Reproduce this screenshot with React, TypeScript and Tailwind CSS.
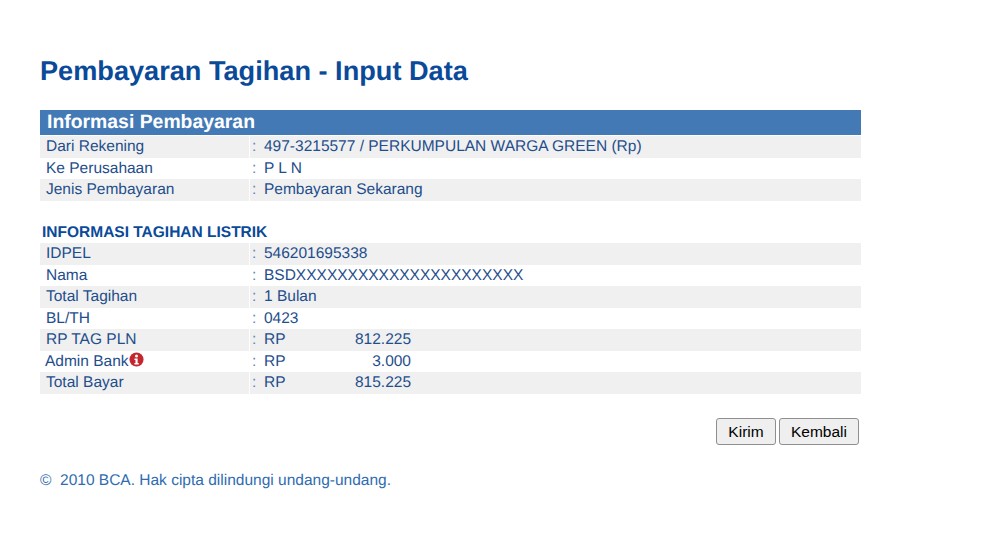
const paymentRows = [
  { label: 'Dari Rekening', value: '497-3215577 / PERKUMPULAN WARGA GREEN (Rp)' },
  { label: 'Ke Perusahaan', value: 'P L N' },
  { label: 'Jenis Pembayaran', value: 'Pembayaran Sekarang' },
];

const billRows = [
  { label: 'IDPEL', value: '546201695338' },
  { label: 'Nama', value: 'BSDXXXXXXXXXXXXXXXXXXXXXX' },
  { label: 'Total Tagihan', value: '1 Bulan' },
  { label: 'BL/TH', value: '0423' },
  { label: 'RP TAG PLN', amount: '812.225' },
  { label: 'Admin Bank', amount: '3.000', info: true },
  { label: 'Total Bayar', amount: '815.225' },
];

type RowData = { label: string; value?: string; amount?: string; info?: boolean };

function InfoIcon() {
  return (
    <svg viewBox="0 0 16 16" className="h-[15px] w-[15px] shrink-0 -translate-y-[2px]">
      <circle cx="8" cy="8" r="7.5" fill="#c4262e" />
      <circle cx="8" cy="4.2" r="1.6" fill="#fff" />
      <path d="M5.8 6.8h3.4v5h1.2v1.6H5.8v-1.6h1.1V8.4H5.8z" fill="#fff" />
    </svg>
  );
}

function Row({ row, shaded }: { row: RowData; shaded: boolean }) {
  const bg = shaded ? 'bg-[#f0f0f0]' : 'bg-white';
  return (
    <div className="flex h-[21.55px] items-center text-[15.5px] leading-none text-[#1f4e8c]">
      <div className={`flex h-full w-[209px] items-center pl-[6px] ${bg}`}>
        <span className={row.info ? '-ml-px' : ''}>{row.label}</span>
        {row.info && <InfoIcon />}
      </div>
      <div className={`ml-[1px] flex h-full flex-1 items-center pl-[2px] ${bg}`}>
        <span className="w-[12px] text-[#5b7fae]">:</span>
        {row.amount ? (
          <span className="flex w-[147px] justify-between">
            <span>RP</span>
            <span>{row.amount}</span>
          </span>
        ) : (
          <span>{row.value}</span>
        )}
      </div>
    </div>
  );
}

export default function App() {
  return (
    <div className="h-[553px] w-[989px] bg-white pl-[40px] pt-[55px] font-['Liberation_Sans',Arial,sans-serif] [text-rendering:geometricPrecision]">
      <div className="w-[821px]">
        <h1 className="h-[55px] text-[27.15px] font-bold leading-[31px] text-[#0a4a99]">
          Pembayaran Tagihan - Input Data
        </h1>

        <div className="flex h-[25px] items-center bg-[#437ab6] pl-[7px] text-[19.4px] font-bold text-white">
          Informasi Pembayaran
        </div>
        <div className="pt-[1px]">
          {paymentRows.map((row, i) => (
            <Row key={row.label} row={row} shaded={i % 2 === 0} />
          ))}
        </div>

        <div className="flex h-[42.4px] items-end pb-[3px] pl-[2px] text-[15.5px] font-bold leading-none text-[#0a4a99]">
          INFORMASI TAGIHAN LISTRIK
        </div>
        <div>
          {billRows.map((row, i) => (
            <Row key={row.label} row={row} shaded={i % 2 === 0} />
          ))}
        </div>

        <div className="flex justify-end gap-[3px] pr-[2px] pt-[24.5px]">
          <button className="h-[27px] w-[60px] rounded-[3px] border border-[#8f8f8f] bg-[#efefef] text-[15.5px] text-black">
            Kirim
          </button>
          <button className="h-[27px] w-[80px] rounded-[3px] border border-[#8f8f8f] bg-[#efefef] text-[15.5px] text-black">
            Kembali
          </button>
        </div>

        <p className="pt-[28px] text-[15.5px] leading-none text-[#2f6cb0]">
          ©&nbsp; 2010 BCA. Hak cipta dilindungi undang-undang.
        </p>
      </div>
    </div>
  );
}
